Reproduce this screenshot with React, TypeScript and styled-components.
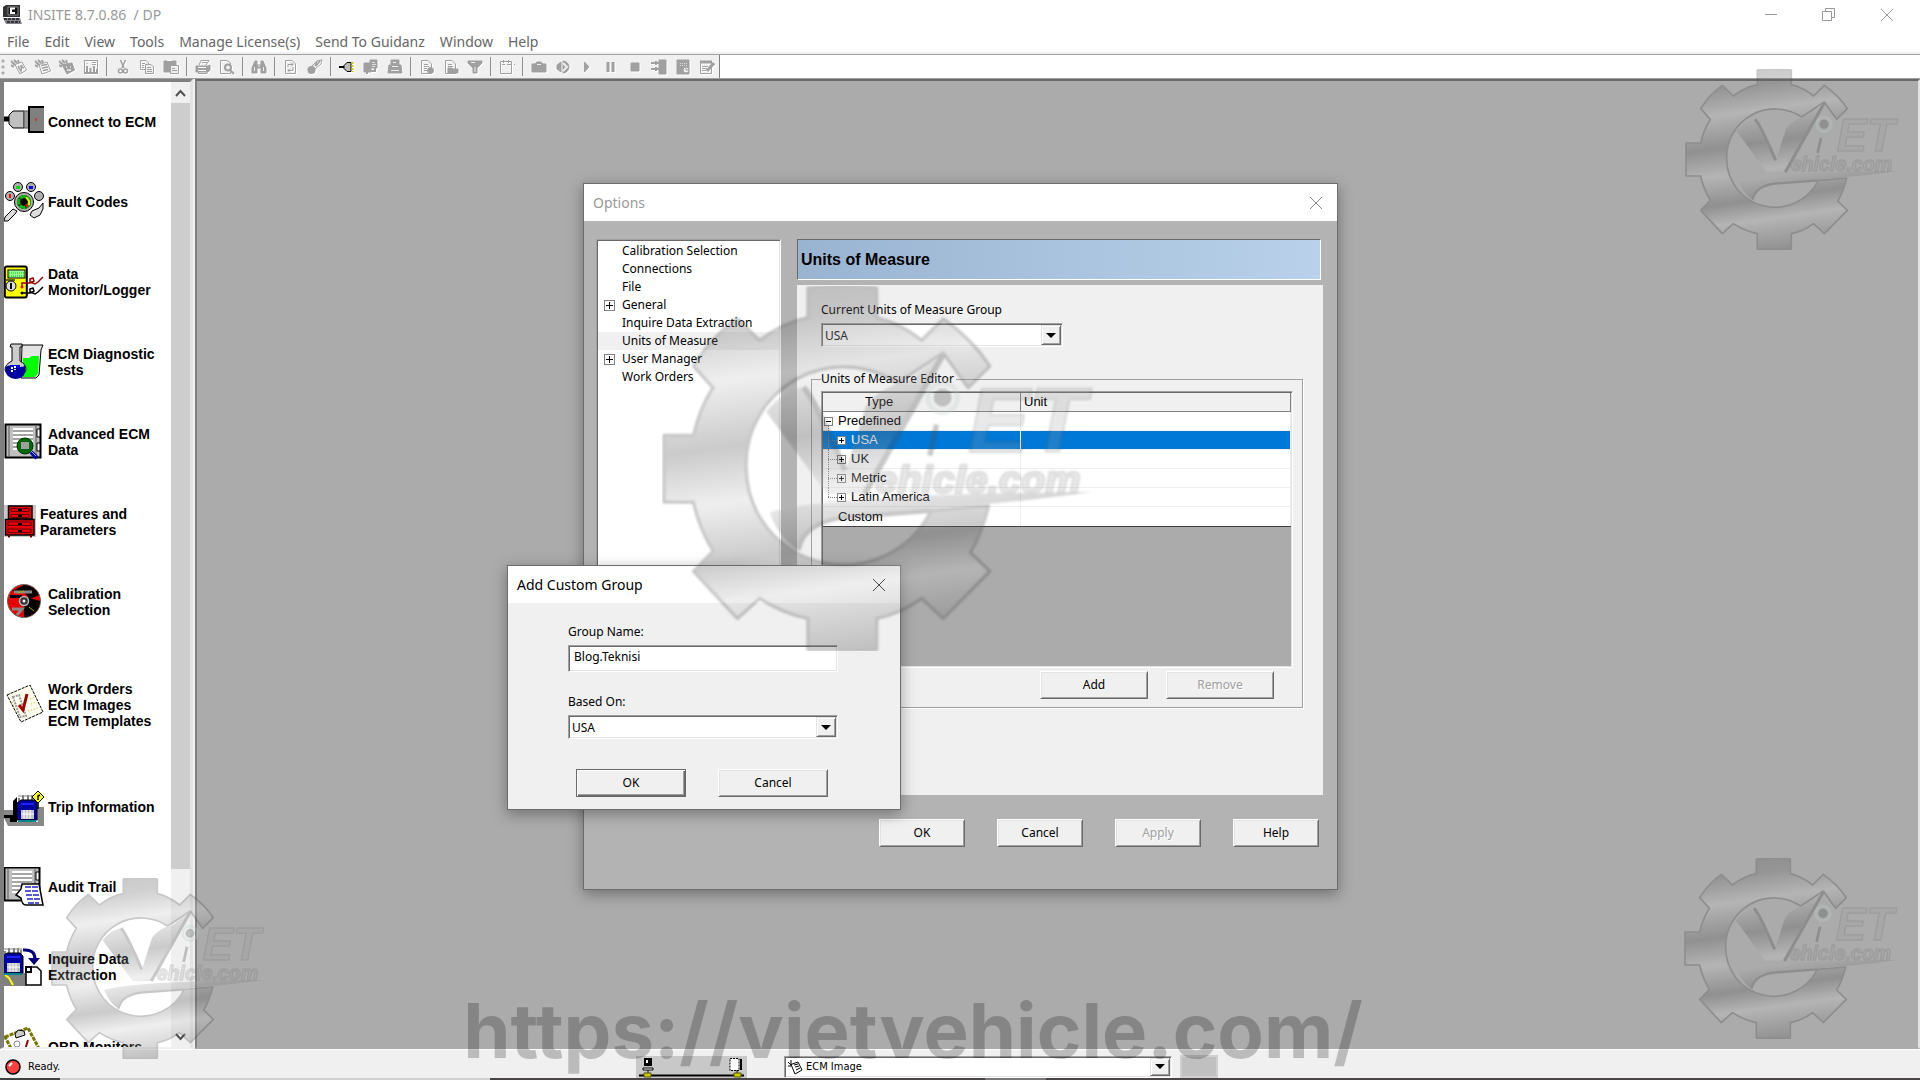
import React from "react";
import styled, { createGlobalStyle, css } from "styled-components";

const ui = '"Noto Sans", sans-serif';
const compact = '"DejaVu Sans Condensed", "Noto Sans", sans-serif';
const arial = '"Liberation Sans", Arial, sans-serif';

const Global = createGlobalStyle`
  *, *::before, *::after { box-sizing: border-box; }
  body { margin: 0; font-family: ${ui}; font-size: 12px; color: #000; overflow: hidden; }
  button, input, select { font: inherit; color: inherit; margin: 0; border-radius: 0; }
`;

const sunken = css`
  border: 1px solid;
  border-color: #a0a0a0 #fff #fff #a0a0a0;
  box-shadow: inset 1px 1px 0 #696969, inset -1px -1px 0 #e3e3e3;
`;

/* ---------- application frame ---------- */
const Desktop = styled.div`
  position: relative;
  display: flex;
  flex-direction: column;
  height: 100vh;
  background: #f0f0f0;
  overflow: hidden;
`;
const TitleBar = styled.header`
  display: flex;
  align-items: center;
  height: 29px;
  padding-left: 2px;
  padding-right: 7px;
  gap: 5px;
  background: #fff;
  color: #999;
  font: 14px ${ui};
  white-space: pre;
`;
const AppTitle = styled.h1`
  flex: 1;
  margin: 0;
  font: inherit;
`;
const Caption = styled.button`
  display: grid;
  place-items: center;
  width: 53px;
  height: 28px;
  padding: 0;
  border: 0;
  background: none;
`;
const MenuBar = styled.nav`
  display: flex;
  align-items: center;
  height: 25px;
  padding: 2px 7px 0;
  gap: 15px;
  background: #fff;
  border-bottom: 2px solid #f0f0f0;
`;
const MenuItem = styled.button`
  padding: 0;
  border: 0;
  background: none;
  color: #666;
  font: 14px/20px ${ui};
`;
const ToolStrip = styled.div`
  display: flex;
  height: 25px;
  background: #fff;
  border-top: 1px solid #a0a0a0;
  border-bottom: 1px solid #a0a0a0;
`;
const Tools = styled.div`
  display: flex;
  background: #f0f0f0;
  border-right: 1px solid #808080;
`;
const Grip = styled.span`
  width: 7px;
  margin: 3px 0;
  background: radial-gradient(circle at 3px 3px, #aaa 1px, transparent 2px) 0 0 / 7px 6px;
`;
const ToolButton = styled.button`
  display: grid;
  place-items: center;
  width: 24px;
  padding: 0;
  border: 0;
  background: none;
  svg { filter: drop-shadow(1px 1px 0 #fff); }
`;
const ToolDivider = styled.span`
  width: 1px;
  margin: 2px 4px 2px 3px;
  background: #909090;
`;
const Workspace = styled.div`
  display: flex;
  flex: 1;
  min-height: 0;
  gap: 2px;
`;
const SidePane = styled.aside`
  display: flex;
  width: 193px;
  background: #fff;
  border: solid;
  border-width: 3px 3px 2px 4px;
  border-color: #808080 #e3e3e3 #f0f0f0 #808080;
`;
const SideList = styled.nav`
  flex: 1;
  min-width: 0;
  overflow: hidden;
`;
const SideLink = styled.a<{ $tall?: boolean }>`
  display: flex;
  align-items: center;
  gap: 4px;
  height: ${(p) => (p.$tall ? 125 : 80)}px;
  color: #000;
  text-decoration: none;
  font: bold 14px/16px ${arial};
  white-space: pre;
  svg { flex: none; }
`;
const Scroll = styled.div`
  display: flex;
  flex-direction: column;
  width: 19px;
  background: #f0f0f0;
`;
const ScrollButton = styled.button`
  display: grid;
  place-items: center;
  height: 21px;
  padding: 0;
  border: 0;
  background: #f0f0f0;
`;
const Track = styled.div`
  flex: 1;
`;
const Thumb = styled.div`
  height: 83%;
  background: #cdcdcd;
`;
const Mdi = styled.main`
  flex: 1;
  background: #ababab;
  border: solid;
  border-width: 2px;
  border-color: #696969 #e3e3e3 #ababab #808080;
`;
const StatusBar = styled.footer`
  display: grid;
  grid-template-columns: 636px 111px 37px 388px auto;
  align-items: center;
  height: 29px;
  padding-top: 5px;
  border-top: 1px solid #fff;
  background: #f0f0f0;
  font: 11px ${compact};
`;
const Ready = styled.span`
  display: flex;
  align-items: center;
  gap: 7px;
  padding-left: 5px;
`;
const LinkState = styled.span`
  height: 22px;
  background: #c8c8c8;
`;
const StatusBox = styled.span`
  grid-column: 5;
  height: 23px;
  width: 38px;
  margin-left: 8px;
  background: #c0c0c0;
  border: 2px solid #cfcfcf;
`;
const Taskbar = styled.div`
  display: flex;
  height: 2px;
  background: #4a4648;
`;
const TaskPart = styled.span<{ $w: number; $c: string }>`
  width: ${(p) => p.$w}px;
  background: ${(p) => p.$c};
`;

/* ---------- shared controls ---------- */
const ComboFrame = styled.div<{ $h: number }>`
  display: grid;
  grid-template-columns: 1fr 20px;
  height: ${(p) => p.$h}px;
  padding: 1px;
  background: #fff;
  ${sunken}
  select {
    grid-area: 1 / 1 / 2 / 3;
    width: 100%;
    appearance: none;
    border: 0;
    padding: 0 22px 0 2px;
    background: none;
    outline: 0;
  }
`;
const ComboArrow = styled.span`
  grid-area: 1 / 2;
  display: grid;
  place-items: center;
  pointer-events: none;
  background: #f0f0f0;
  border: 1px solid;
  border-color: #e3e3e3 #696969 #696969 #e3e3e3;
  box-shadow: inset 1px 1px 0 #fff, inset -1px -1px 0 #a0a0a0;
`;
const StatusCombo = styled(ComboFrame)`
  grid-column: 4;
  select { padding-left: 20px; }
  > svg { grid-area: 1 / 1; align-self: center; margin-left: 1px; }
`;
const PushButton = styled.button<{ $w: number; $primary?: boolean }>`
  width: ${(p) => p.$w}px;
  height: 28px;
  padding: 0 0 2px;
  background: #f0f0f0;
  border: 1px solid;
  border-color: ${(p) => (p.$primary ? "#696969" : "#fff #696969 #696969 #fff")};
  box-shadow: ${(p) =>
    p.$primary
      ? "inset 1px 1px 0 #fff, inset -1px -1px 0 #696969, inset -2px -2px 0 #a0a0a0"
      : "inset 1px 1px 0 #e3e3e3, inset -1px -1px 0 #a0a0a0"};
  &:disabled { color: #a0a0a0; text-shadow: 1px 1px 0 #fff; }
`;

/* ---------- dialogs ---------- */
const Window = styled.section<{ $x: number; $y: number; $w: number; $face: string }>`
  position: absolute;
  left: calc(50% - ${(p) => p.$x}px);
  top: ${(p) => p.$y}px;
  width: ${(p) => p.$w}px;
  background: ${(p) => p.$face};
  border: 1px solid #6c6c6c;
  box-shadow: 0 4px 14px rgba(0, 0, 0, 0.35);
`;
const WindowBar = styled.div<{ $active?: boolean }>`
  display: flex;
  align-items: center;
  justify-content: space-between;
  height: 37px;
  padding: 0 12px 0 9px;
  background: #fff;
  color: ${(p) => (p.$active ? "#000" : "#999")};
  h2 { margin: 0; font: 14px ${ui}; }
`;
const CloseButton = styled.button`
  display: grid;
  padding: 2px;
  border: 0;
  background: none;
`;
const OptionsBody = styled.div`
  display: grid;
  grid-template-columns: 185px 1fr;
  column-gap: 16px;
  padding: 18px 14px 42px 12px;
`;
const Tree = styled.ul`
  margin: 0;
  padding: 2px 1px;
  list-style: none;
  background: #fff;
  ${sunken}
`;
const TreeItem = styled.li<{ $on?: boolean }>`
  display: grid;
  grid-template-columns: 13px 1fr;
  column-gap: 5px;
  align-items: center;
  height: 18px;
  padding-left: 6px;
  line-height: 18px;
  background: ${(p) => (p.$on ? "#f0f0f0" : "none")};
`;
const Page = styled.div`
  display: flex;
  flex-direction: column;
`;
const Banner = styled.h3`
  margin: 0 2px 5px 0;
  padding: 0 3px;
  height: 41px;
  font: bold 16px/40px ${arial};
  background: linear-gradient(90deg, #99b4d1, #b9d1ea);
  border: 1px solid;
  border-color: #696969 #fff #fff #696969;
`;
const Panel = styled.div`
  height: 510px;
  padding: 18px 20px 0 14px;
  background: #f0f0f0;
`;
const Field = styled.div<{ $w: number }>`
  display: grid;
  gap: 6px;
  width: ${(p) => p.$w}px;
  label { line-height: 14px; }
`;
const CurrentField = styled(Field)`
  margin: 0 0 25px 10px;
`;
const Group = styled.fieldset`
  margin: 0;
  padding: 5px 9px 8px;
  min-width: 0;
  border: 1px solid #a0a0a0;
  box-shadow: 1px 1px 0 #fff;
  legend { padding: 0 2px 0 0; line-height: 14px; }
`;
const GridBox = styled.div`
  height: 277px;
  padding: 1px;
  margin-bottom: 3px;
  background: #ababab;
  ${sunken}
`;
const UnitTable = styled.table`
  width: 100%;
  table-layout: fixed;
  border-spacing: 0;
  background: #fff;
  border-bottom: 1px solid #404040;
  font: 13px ${arial};
  th, td { height: 19px; padding: 0; line-height: 18px; font-weight: normal; text-align: left; }
  th { background: #f0f0f0; border-right: 1px solid #808080; border-bottom: 1px solid #808080; }
  th:first-child { width: 198px; padding-left: 42px; }
  th:last-child { padding-left: 3px; }
  td { border-bottom: 1px solid #eee; border-right: 1px solid #eee; }
  tr:last-child td { border-bottom: 0; }
`;
const UnitRow = styled.tr<{ $on?: boolean }>`
  ${(p) => p.$on && css`background: #0078d7; color: #fff;`}
`;
const UnitName = styled.span`
  display: flex;
  height: 18px;
`;
const GridActions = styled.div`
  display: flex;
  justify-content: flex-end;
  gap: 18px;
  padding-right: 19px;
`;
const Footer = styled.div`
  grid-column: 1 / -1;
  display: flex;
  justify-content: flex-end;
  gap: 32px;
  padding: 24px 4px 0 0;
`;
const CustomBody = styled.form`
  display: grid;
  padding: 22px 63px 12px 60px;
`;
const NameInput = styled.input`
  height: 27px;
  padding: 0 5px 5px;
  outline: 0;
  background: #fff;
  ${sunken}
`;
const NameField = styled(Field)`
  margin-bottom: 23px;
`;
const CustomActions = styled.div`
  display: flex;
  gap: 32px;
  padding: 30px 0 0 8px;
`;

/* ---------- watermarks ---------- */
const Overlay = styled.div`
  position: absolute;
  inset: 0;
  pointer-events: none;
  overflow: hidden;
`;
const Mark = styled.div<{ $left: string; $top: number; $w: number }>`
  position: absolute;
  left: ${(p) => p.$left};
  top: ${(p) => p.$top}px;
  width: ${(p) => p.$w}px;
  svg { display: block; width: 100%; opacity: 0.3; }
`;
const SiteUrl = styled.div`
  position: absolute;
  left: 0;
  right: 0;
  top: 988px;
  padding-right: 94px;
  text-align: center;
  font: 700 76px/84px Inter, sans-serif;
  color: rgba(0, 0, 0, 0.22);
`;

function Gear({ id }: { id: string }) {
  return (
    <svg viewBox="75 56 642 542" aria-hidden="true">
      <defs>
        <linearGradient id={id} gradientUnits="userSpaceOnUse" x1="300" y1="57" x2="375" y2="597">
          <stop offset="0" stopColor="#555" />
          <stop offset="0.08" stopColor="#666" />
          <stop offset="0.22" stopColor="#ccc" />
          <stop offset="0.4" stopColor="#555" />
          <stop offset="0.55" stopColor="#ccc" />
          <stop offset="0.71" stopColor="#555" />
          <stop offset="0.82" stopColor="#ccc" />
          <stop offset="1" stopColor="#555" />
        </linearGradient>
        <filter id={id + "b"} x="-5%" y="-5%" width="110%" height="110%">
          <feGaussianBlur stdDeviation="1.6" />
        </filter>
      </defs>
      <g filter={`url(#${id}b)`} stroke="#4c4c4c" strokeWidth="5" strokeLinejoin="round">
        <path
          fill={`url(#${id})`}
          fillRule="evenodd"
          d="M292 59Q343 54 394 59V103Q430 112 461 137L493 105Q535 135 562 175L530 207L493 155L425 200A145 145 0 0 0 200 327A145 145 0 0 0 475 390L560 383Q550 425 533 452L562 480L493 550L461 520Q430 543 394 550V597H292V550Q256 543 220 520L187 550L122 480L151 450Q130 415 122 377H78V278H122Q130 240 151 207L122 175Q150 130 187 105L220 137Q256 110 292 103Z"
        />
        <path fill={`url(#${id})`} stroke="none" d="M230 243Q255 210 288 205L348 330L378 235Q400 205 440 198Q470 175 495 153L378 365H320Z" />
        <path fill="none" strokeWidth="9" d="M285 207Q300 220 347 330M493 157L376 365" />
        <path fill={`url(#${id})`} stroke="none" d="M235 392Q330 365 714 362Q600 378 475 387L345 400Q285 405 278 450Q245 425 235 392Z" />
        <path fill="none" strokeWidth="7" d="M475 390L345 400Q285 408 278 448" />
        <circle cx="492" cy="222" r="22" fill="none" stroke="#c4cccc" strokeWidth="8" />
        <circle cx="492" cy="222" r="11" fill="#555" />
        <path d="M483 262L473 308" strokeWidth="8" />
        <g fill="#999" stroke="#666" strokeWidth="4" opacity="0.7" fontWeight="bold" fontStyle="italic" fontFamily="Liberation Sans, Arial, sans-serif">
          <text x="530" y="302" fontSize="136">ET</text>
          <text x="392" y="363" fontSize="59">ehicle.com</text>
        </g>
      </g>
    </svg>
  );
}

/* ---------- glyphs ---------- */
const Arrow = () => (
  <svg width="10" height="5" aria-hidden="true"><path d="M0 0H10L5 5Z" /></svg>
);
const Cross = ({ c }: { c: string }) => (
  <svg width="14" height="14" fill="none" stroke={c} aria-hidden="true"><path d="M1 1L13 13M13 1L1 13" /></svg>
);
const Chevron = ({ down }: { down?: boolean }) => (
  <svg width="11" height="8" fill="none" stroke="#505050" strokeWidth="2" aria-hidden="true">
    <path d={down ? "M1 1L5.5 6L10 1" : "M1 7L5.5 2L10 7"} />
  </svg>
);
const Box = () => (
  <svg width="11" height="11" shapeRendering="crispEdges" fill="none" stroke="#808080" aria-hidden="true">
    <rect x=".5" y=".5" width="10" height="10" fill="#fff" />
    <path d="M2 5.5H9M5.5 2V9" stroke="#000" />
  </svg>
);
function Branch({ kind }: { kind: "root" | "mid" | "last" | "none" }) {
  const child = kind === "mid" || kind === "last";
  return (
    <svg width={child ? 28 : 15} height="19" shapeRendering="crispEdges" fill="none" stroke="#808080" aria-hidden="true">
      {kind === "root" && <><rect x="1.5" y="5.5" width="8" height="8" fill="#fff" /><path d="M3 9.5H8" stroke="#000" /><path d="M5.5 14V19" strokeDasharray="1 1" /></>}
      {child && <><path d={kind === "mid" ? "M5.5 0V19M5 9.5H14" : "M5.5 0V9M5 9.5H14"} strokeDasharray="1 1" /><rect x="14.5" y="5.5" width="8" height="8" fill="#fff" /><path d="M16 9.5H21M18.5 7V12" stroke="#000" /></>}
    </svg>
  );
}

const g = "#a0a0a0";
const sheet = <path d="M2.500 1.500H9L12.500 5V14.500H2.500Z" />;
const handle = <path d="M0 2L4 6M0 6L3 8M3 1L6 4M7 1L8 4" strokeWidth="2" />;
const tools: (React.ReactNode | null)[] = [
  <>{handle}<path d="M4 5.500L11 3L15.500 11L9 15Z" /><path d="M7 7L10 12L11 6M9 7L13 9" strokeWidth="1.500" /></>,
  <>{handle}<path d="M4 5.500L12 3L15.500 12L7 15Z" /><path d="M6 6.500L12 5.500M7 9L13 8M8 11.500L13 10.500" strokeWidth="1.500" /></>,
  <>{handle}<path d="M3 5.500L13 4L15.500 11L8 15Z" fill={g} /><path d="M7 8H8M11 8H12M8 11H12" stroke="#eee" strokeWidth="1.500" /></>,
  <><rect x="1.500" y="1.500" width="13" height="13" /><path d="M4 4V5M9 3.500H13M9 5.500H13" /><path d="M4 7V14M7.500 9V14M11 7V14M14 10V14" strokeWidth="2" /><path d="M1 14H15" strokeWidth="2" /></>,
  null,
  <><path d="M5.500 1L9 9M10.500 1L7 9" strokeWidth="1.500" /><circle cx="5.500" cy="12" r="2" strokeWidth="1.500" /><circle cx="10.500" cy="12" r="2" strokeWidth="1.500" /></>,
  <><path d="M1.500 1.500H7L9.500 4V10.500H1.500Z" /><path d="M6.500 5.500H12L14.500 8V14.500H6.500Z" fill="#f0f0f0" /><path d="M3 4.500H6M3 6.500H5M3 8.500H5M8 8.500H12M8 10.500H13M8 12.500H13" /></>,
  <><path d="M1 2H13V13H1Z" fill={g} /><path d="M4 1.500H9" stroke="#fff" /><path d="M7.500 6.500H15.500V14.500H7.500Z" fill="#f0f0f0" /><path d="M9 9.500H12M9 11.500H14" /></>,
  null,
  <><path d="M4 6L6 1.500H14L11 6" /><path d="M7 3.500H12" /><path d="M1 7H13L15 6V11L13 13H1Z" fill={g} /><path d="M3 8.500H11M3 11.500H11" stroke="#fff" /><path d="M3.500 12V14.500H12V12" /></>,
  <><path d="M1.500 1.500H8L11.500 4V14.500H1.500Z" /><circle cx="9" cy="8.500" r="3" fill="#f0f0f0" strokeWidth="2" /><path d="M11 11L15 15" strokeWidth="2" /></>,
  null,
  <><path d="M4 2H6V6H10V2H12L15 9V14H10V9H6V14H1V9Z" fill={g} /><path d="M3.500 8V12M12.500 8V12M8 6V8" stroke="#eee" /></>,
  null,
  <>{sheet}<path d="M5 8V5.500H10M8 3.500L10 5.500L8 7.500M10 8V11.500H5M7 9.500L5 11.500L7 13.500" /></>,
  <><path d="M5 7L10 2L15 1L14 5L8 10Z" /><circle cx="4.500" cy="11" r="3" fill={g} strokeWidth="2" /><path d="M10 2L8 7M13 2L9 7" strokeWidth="1.500" /></>,
  null,
  <><path d="M0 8H6" stroke="#000" strokeWidth="2" /><path d="M5 6.500L8 3.500H12V12.500H8L5 9.500Z" stroke="#000" fill="#bbb" /><path d="M13.500 3V13" stroke="#cc0" strokeWidth="2" strokeDasharray="2 1" /></>,
  <><path d="M1 4H8V13H1ZM7 1H14V9H7Z" fill={g} /><path d="M4 13V15M8 12H12L12 9" strokeWidth="2" /><path d="M9 3.500H12M9 5.500H13M9 7.500H12" stroke="#ddd" /></>,
  <><path d="M4 1H12V6H14L15 14H1L2 6H4Z" fill={g} /><path d="M6 3.500H9M5 7.500H11M4 11.500H12" stroke="#eee" /></>,
  null,
  <>{sheet}<path d="M5 5.500H9M5 7.500H10M5 9.500H8M5 11.500H8" /><circle cx="11.500" cy="11.500" r="3" fill={g} /></>,
  <>{sheet}<path d="M5 5.500H9M5 7.500H10" /><path d="M5 9H9L10 10H15V14H5Z" fill={g} /></>,
  <><path d="M1 2H15V4L10 9V14H6V9L1 4Z" fill={g} /><path d="M4 3.500H8M8 8V13" stroke="#eee" /></>,
  null,
  <><path d="M1.500 2.500H12.500V14.500H1.500Z" /><path d="M3 5.500H6M8 5.500H12M4.500 1V4M9.500 1V4M15 5.500H16" /></>,
  null,
  <><path d="M1 5H4L6 3H10L12 5H15V13H1Z" fill={g} /><path d="M6 5.500H10" stroke="#eee" /></>,
  <><path d="M6 3L2 6V10L6 13ZM8 2A6 6 0 0 1 8 14Z" fill={g} /><path d="M8 4L12 8L8 12" stroke="#eee" strokeWidth="2" /></>,
  <path d="M5.500 3L10 8L5.500 13Z" fill={g} />,
  <path d="M5 3V13M10 3V13" strokeWidth="3" />,
  <path d="M4 4H12V12H4Z" fill={g} />,
  <><path d="M8 1H15V15H8Z" fill={g} /><path d="M0 4H8M0 10H8M5 2V6M5 8V12" strokeWidth="2" /></>,
  <><path d="M2 1H14V15H2Z" fill={g} /><path d="M5 4.500H12M5 6.500H12" stroke="#ddd" strokeDasharray="1 1" /><circle cx="11" cy="11" r="3" fill="#eee" /><path d="M11 9V11H13" /></>,
  <><path d="M1.500 2.500H12.500V14.500H1.500Z" /><path d="M1 3H13" strokeWidth="3" /><path d="M3 7.500H9M3 9.500H8M3 11.500H7" /><path d="M15 4L8 12" strokeWidth="3" /></>,
];
const toolNames = ["New work order", "Open work order", "Save work order", "Chart", "", "Cut", "Copy", "Paste", "", "Print", "Preview", "", "Find", "", "Refresh", "Guidanz", "", "Connect", "Transfer", "Disconnect", "", "Report", "Template", "Filter", "", "Window", "", "Snapshot", "Resume", "Play", "Pause", "Stop", "Log", "Schedule", "Notes"];

const k = "#000";
const ecmBox = <><rect x="1.500" y="3.500" width="35" height="33" fill="#c0c0c0" stroke={k} strokeWidth="2" /><path d="M5 4V36M32 5V36" stroke="#555" /><path d="M9 8H29M9 12H29M9 16H29M9 20H29M9 24H29M9 28H29" stroke="#fff" strokeWidth="2" /><path d="M9 10H29M9 14H29M9 18H29M9 22H29M9 26H29" stroke="#888" /><path d="M33 8H36V16H33ZM33 22H36V30H33Z" stroke={k} fill="#fff" /></>;
const truck = <><path d="M4 6V14M8 3V10M13 3V10M17 3V10M20 5V10" stroke={k} fill="none" /><path d="M3 4H21" stroke="#888" /><path d="M2 11L6 8H19L22 11V28H2Z" fill="#0000a0" stroke={k} /><path d="M6 12H19" stroke="#22f" strokeWidth="2" /><path d="M6 18H19V27H6Z" fill="#c0c0c0" /><path d="M9 18V27M12 18V27M15 18V27M6 22H19" stroke="#fff" /><path d="M3 29H21" stroke="#088" strokeWidth="2" /></>;
const art: Record<string, React.ReactNode> = {
  connect: <><path d="M0 17H5" stroke={k} strokeWidth="5" /><path d="M5 13L9 9H20V26H9L5 22Z" fill="#c0c0c0" stroke={k} /><rect x="20" y="9" width="5" height="17" fill="#999" stroke="#555" /><path d="M40 5H25V30H40" fill="#808080" stroke={k} strokeWidth="2" /><path d="M32 16V19" stroke="red" /></>,
  fault: <><g fill="#b0b0b0" stroke={k}><circle cx="6" cy="14" r="4.500" /><circle cx="14" cy="5" r="4.500" /><circle cx="27" cy="5" r="4.500" /><circle cx="35" cy="14" r="4.500" /><circle cx="20" cy="20" r="9.500" /><path d="M1 35L9 27L13 29L11 32L4 39H0ZM39 21L35 26L28 29L26 33L30 36L36 33L39 27Z" fill="#ddd" /></g><path d="M5 12H7V16H5Z" fill="red" /><path d="M12 4H16V7H12Z" fill="#0d0" /><path d="M25 4H29V7H25Z" fill="#00f" /><circle cx="20" cy="20" r="7" fill="#222" /><circle cx="20" cy="20" r="5.500" fill="none" stroke="#0b0" strokeWidth="3" strokeDasharray="6 1" /><path d="M22 15L25 19V23" fill="none" stroke="#ee0" strokeWidth="2" /><path d="M20 20L24 25" stroke="red" strokeWidth="2" /><circle cx="20" cy="20" r="3" fill={k} /></>,
  data: <><rect x=".8" y="4.500" width="22" height="31" rx="2" fill="#ff0" stroke={k} strokeWidth="2" /><rect x="4" y="8" width="17" height="8" fill="#9f9" stroke={k} /><path d="M5 11H20M5 14H20" stroke="#0b0" strokeDasharray="1 1" /><path d="M2 18H11" stroke="#660" strokeWidth="2" /><circle cx="7" cy="24" r="5" fill="#ddd" stroke={k} /><path d="M7 21V27" stroke={k} strokeWidth="2" /><circle cx="18" cy="25" r="1.500" fill="red" /><circle cx="18" cy="31" r="1.500" fill={k} /><path d="M18 24V21H26L30 19L29 16L26 17L26 20L31 22L34 20L39 15" fill="none" stroke="#900" strokeWidth="1.500" /><path d="M18 31H26L30 29L29 26L26 27L26 30L31 32L34 30L39 25" fill="none" stroke={k} strokeWidth="1.500" /></>,
  tests: <><path d="M18 3H39L37 8L35 33L32 36H17Z" fill="#e4e4e4" stroke={k} /><path d="M19 16H25L28 14H35L34 31L31 35H19Z" fill="#0f0" /><path d="M7 2H18V5H16V19Q22 22 22 28A11 10 0 0 1 1 28Q1 22 8 19V5H6Z" fill="#ccc" stroke={k} /><path d="M1.500 25Q6 22 11 24T21 24V30Q20 37 11 37Q2 36 1.500 28Z" fill="#0000a0" /><path d="M6 23H16V26H6Z" fill="#00f" /><path d="M8 25V31M11 24V28" stroke="#fff" strokeWidth="2" strokeDasharray="2 1" /></>,
  advanced: <g transform="translate(0 -1)">{ecmBox}<circle cx="21" cy="25" r="8" fill="#006800" stroke="#003000" /><rect x="17" y="21" width="8" height="7" fill="#a0a0a0" /><path d="M27 31L33 37" stroke="#00a" strokeWidth="4" /><path d="M27 30L32 35" stroke="#6cf" /></g>,
  features: <g transform="translate(0 -1)"><path d="M0 4H32V36H0Z" fill="#c8c8c8" /><path d="M4.500 5H28V18H4.500ZM1.500 18.500H30V34H1.500Z" fill="#e80000" stroke={k} strokeWidth="1.500" /><path d="M7 7.500H25V10.500H7ZM7 13.500H25V16.500H7ZM4 21H27V24.500H4ZM4 28H27V31.500H4Z" fill="none" stroke="#600" /><path d="M14 9H18M14 15H18M14 23H18M14 30H18" stroke={k} strokeWidth="2" /><path d="M4 35H6M26 35H28" stroke="#600" strokeWidth="3" /></g>,
  calibration: <g transform="translate(0 -1)"><circle cx="20" cy="20" r="16.500" fill="#e80000" stroke="#666" /><path d="M20 4A16 16 0 0 1 35 14L26 18L20 11L8 10ZM22 16L36 20A16 16 0 0 1 20 36L20 26ZM6 14H18V17H6Z" fill={k} /><path d="M10 11H28M8 28H18L13 34" fill="none" stroke="#888" strokeWidth="3" /><path d="M25 26L30 30M14 12L20 10" stroke="#aa0" /><circle cx="20" cy="20" r="4.500" fill="#333" stroke="#bbb" strokeWidth="1.500" /><circle cx="20" cy="20" r="1.500" fill="#fff" /></g>,
  orders: <g transform="translate(0 -1)"><path d="M3 11L26 1L39 28L17 38Z" fill="#fffff0" stroke={k} strokeDasharray="3 1" /><path d="M9 13L15 11L22 32L16 33Z" fill="none" stroke="#999" strokeWidth="2" strokeDasharray="2 1" /><path d="M15 21L19 26L23 10" fill="none" stroke="#a00000" strokeWidth="3" /><path d="M26 15L31 13M27 20L33 18M24 27L34 24M8 18L12 28" stroke="#bb0" strokeDasharray="1 2" /></g>,
  trip: <g transform="translate(0 1)"><path d="M0 22H10V34H34L28 19H40V38H4L0 30Z" fill="#888" /><path d="M9 13L13 9V34H6V30H0V27H9Z" fill={k} /><g transform="translate(11 4)">{truck}</g><path d="M34 3L40 9L34 15L28 9Z" fill="#ff0" stroke={k} /><path d="M34 14V21M34 12V8L36 7" fill="none" stroke={k} strokeWidth="1.500" /></g>,
  audit: <><g transform="translate(-1 -3)">{ecmBox}</g><path d="M18 17H35L39 38H22Q18 38 17 31L12 28L17 22Z" fill="#fff" stroke={k} strokeWidth="1.500" /><path d="M21 20H34M21 24H35M22 28H35M23 32H36M24 36H35" stroke="#2222d0" strokeWidth="1.500" strokeDasharray="6 1" /></>,
  inquire: <><path d="M0 26H22V39H0Z" fill="#808080" /><path d="M1 28L5 31L9 38" fill="none" stroke="#ff0" strokeWidth="2" /><g transform="translate(-3 -2)">{truck}</g><path d="M19 3Q31 2 31 12" fill="none" stroke="#00007a" strokeWidth="3" /><path d="M24 11H36L30 18Z" fill="#00007a" /><path d="M22 20H33L37 24V38H22Z" fill="#fff" stroke={k} strokeWidth="1.500" /><path d="M22 20H27V25H22Z" fill="#fff" stroke={k} strokeWidth="2" /></>,
  obd: <g transform="translate(0 -1)"><path d="M1 11L24 2L39 30L16 39Z" fill="#fff" stroke="#770" strokeWidth="3" strokeDasharray="4 1" /><path d="M11 8L14 4L20 5L21 9L12 12Z" fill="#ccc" stroke={k} /><circle cx="13" cy="18" r="3" fill="none" stroke="#888" /><path d="M18 22L21 24L24 14" fill="none" stroke="#900" strokeWidth="2" /></g>,
};
const links: [string, string][] = [
  ["connect", "Connect to ECM"],
  ["fault", "Fault Codes"],
  ["data", "Data\nMonitor/Logger"],
  ["tests", "ECM Diagnostic\nTests"],
  ["advanced", "Advanced ECM\nData"],
  ["features", "Features and\nParameters"],
  ["calibration", "Calibration\nSelection"],
  ["orders", "Work Orders\nECM Images\nECM Templates"],
  ["trip", "Trip Information"],
  ["audit", "Audit Trail"],
  ["inquire", "Inquire Data\nExtraction"],
  ["obd", "OBD Monitors"],
];
const treeItems: [string, boolean][] = [
  ["Calibration Selection", false], ["Connections", false], ["File", false], ["General", true],
  ["Inquire Data Extraction", false], ["Units of Measure", false], ["User Manager", true], ["Work Orders", false],
];
const unitRows: [string, "root" | "mid" | "last" | "none"][] = [
  ["Predefined", "root"], ["USA", "mid"], ["UK", "mid"], ["Metric", "mid"], ["Latin America", "last"], ["Custom", "none"],
];
const menus = ["File", "Edit", "View", "Tools", "Manage License(s)", "Send To Guidanz", "Window", "Help"];

export default function App() {
  return (
    <Desktop>
      <Global />
      <TitleBar>
        <svg width="21" height="22" aria-hidden="true">
          <path d="M1 3L4 1H18V13H1Z" fill="#333" /><path d="M6 3H16V11H6Z" fill="#111" stroke="#888" />
          <path d="M13 4.500H9V9H13" fill="none" stroke="#fff" strokeWidth="2" />
          <path d="M1 14H18L20 20H4Z" fill="#85818e" /><path d="M2 15H17M5 18H18" stroke="#333" strokeWidth="2" strokeDasharray="3 1" />
        </svg>
        <AppTitle>INSITE 8.7.0.86  / DP</AppTitle>
        <Caption aria-label="Minimize"><svg width="12" height="12"><path d="M0 5.500H12" stroke="#999" /></svg></Caption>
        <Caption aria-label="Restore"><svg width="13" height="13" fill="none" stroke="#999"><path d="M.5 3.500H9.500V12.500H.5ZM3.500 3V.5H12.500V9.500H10" /></svg></Caption>
        <Caption aria-label="Close"><Cross c="#999" /></Caption>
      </TitleBar>
      <MenuBar>{menus.map((m) => <MenuItem key={m}>{m}</MenuItem>)}</MenuBar>
      <ToolStrip>
        <Tools>
          <Grip />
          {tools.map((t, i) =>
            t ? (
              <ToolButton key={i} aria-label={toolNames[i]}>
                <svg width="16" height="16" fill="none" stroke={g}>{t}</svg>
              </ToolButton>
            ) : <ToolDivider key={i} />
          )}
        </Tools>
      </ToolStrip>

      <Workspace>
        <SidePane>
          <SideList>
            {links.map(([id, text]) => (
              <SideLink key={id} href="#" $tall={id === "orders"}>
                <svg width={id === "features" ? 32 : 40} height="40" fill="none" aria-hidden="true">{art[id]}</svg>
                <span>{text}</span>
              </SideLink>
            ))}
          </SideList>
          <Scroll>
            <ScrollButton aria-label="Scroll up"><Chevron /></ScrollButton>
            <Track><Thumb /></Track>
            <ScrollButton aria-label="Scroll down"><Chevron down /></ScrollButton>
          </Scroll>
        </SidePane>
        <Mdi />
      </Workspace>

      <StatusBar>
        <Ready>
          <svg width="16" height="16" aria-hidden="true"><circle cx="8" cy="8" r="7" fill="#ff4040" stroke="#000" strokeWidth="1.500" /><path d="M4 7L7 4" stroke="#fff" strokeWidth="2" /></svg>
          Ready.
        </Ready>
        <LinkState>
          <svg width="111" height="22" aria-hidden="true">
            <path d="M3 19.500H108" stroke="#000" strokeWidth="2" />
            <path d="M8 2H16V10H8Z" /><path d="M10 4H12V7H10Z" fill="#fff" /><path d="M7 12H17V14H7Z" fill="#fff" stroke="#000" />
            <path d="M94 2.500H103V14.500H94Z" fill="#fff" stroke="#000" strokeDasharray="2 1" /><path d="M105 3V14" stroke="#000" strokeWidth="2" />
            <path d="M12 14V18M101 14V18" stroke="#000" /><path d="M8 17H15V21H8ZM98 17H105V21H98Z" fill="#cc0" stroke="#550" />
          </svg>
        </LinkState>
        <StatusCombo $h={22}>
          <svg width="16" height="16" fill="#fff" stroke="#000" aria-hidden="true"><path d="M4 5.500L11 3L15 11L8 15Z" /><path d="M1 3L5 7M4 1V5M1 7H4M7 6L11 5M8 8L12 7M9 11L13 9" /></svg>
          <select aria-label="Connection"><option>ECM Image</option></select>
          <ComboArrow><Arrow /></ComboArrow>
        </StatusCombo>
        <StatusBox />
      </StatusBar>
      <Taskbar>
        <TaskPart $w={60} $c="#404040" />
        <TaskPart $w={430} $c="#d0d0d0" />
        <TaskPart $w={495} $c="#4a4648" />
        <TaskPart $w={61} $c="#777" />
      </Taskbar>

      <Window $x={377} $y={183} $w={755} $face="#b3b3b3" aria-label="Options">
        <WindowBar><h2>Options</h2><CloseButton aria-label="Close"><Cross c="#888" /></CloseButton></WindowBar>
        <OptionsBody>
          <Tree>
            {treeItems.map(([t, box]) => (
              <TreeItem key={t} $on={t === "Units of Measure"}>{box ? <Box /> : <i />}<span>{t}</span></TreeItem>
            ))}
          </Tree>
          <Page>
            <Banner>Units of Measure</Banner>
            <Panel>
              <CurrentField $w={242}>
                <label htmlFor="current">Current Units of Measure Group</label>
                <ComboFrame $h={24}>
                  <select id="current"><option>USA</option></select>
                  <ComboArrow><Arrow /></ComboArrow>
                </ComboFrame>
              </CurrentField>
              <Group>
                <legend>Units of Measure Editor</legend>
                <GridBox>
                  <UnitTable>
                    <thead><tr><th>Type</th><th>Unit</th></tr></thead>
                    <tbody>
                      {unitRows.map(([name, kind]) => (
                        <UnitRow key={name} $on={name === "USA"}>
                          <td><UnitName><Branch kind={kind} />{name}</UnitName></td>
                          <td />
                        </UnitRow>
                      ))}
                    </tbody>
                  </UnitTable>
                </GridBox>
                <GridActions>
                  <PushButton $w={108}>Add</PushButton>
                  <PushButton $w={108} disabled>Remove</PushButton>
                </GridActions>
              </Group>
            </Panel>
          </Page>
          <Footer>
            <PushButton $w={86}>OK</PushButton>
            <PushButton $w={86}>Cancel</PushButton>
            <PushButton $w={86} disabled>Apply</PushButton>
            <PushButton $w={86}>Help</PushButton>
          </Footer>
        </OptionsBody>
      </Window>

      <Window $x={453} $y={565} $w={394} $face="#f0f0f0" aria-label="Add Custom Group">
        <WindowBar $active><h2>Add Custom Group</h2><CloseButton aria-label="Close"><Cross c="#111" /></CloseButton></WindowBar>
        <CustomBody onSubmit={(e) => e.preventDefault()}>
          <NameField $w={270}>
            <label htmlFor="group">Group Name:</label>
            <NameInput id="group" defaultValue="Blog.Teknisi" />
          </NameField>
          <Field $w={270}>
            <label htmlFor="based">Based On:</label>
            <ComboFrame $h={24}>
              <select id="based"><option>USA</option></select>
              <ComboArrow><Arrow /></ComboArrow>
            </ComboFrame>
          </Field>
          <CustomActions>
            <PushButton $w={110} $primary>OK</PushButton>
            <PushButton $w={110} type="button">Cancel</PushButton>
          </CustomActions>
        </CustomBody>
      </Window>

      <Overlay>
        <Mark $left="calc(100% - 235px)" $top={69} $w={214}><Gear id="ga" /></Mark>
        <Mark $left="calc(100% - 236px)" $top={858} $w={214}><Gear id="gb" /></Mark>
        <Mark $left="51px" $top={878} $w={214}><Gear id="gc" /></Mark>
        <Mark $left="calc(50% - 298px)" $top={286} $w={432}><Gear id="gd" /></Mark>
        <SiteUrl>https://vietvehicle.com/</SiteUrl>
      </Overlay>
    </Desktop>
  );
}
